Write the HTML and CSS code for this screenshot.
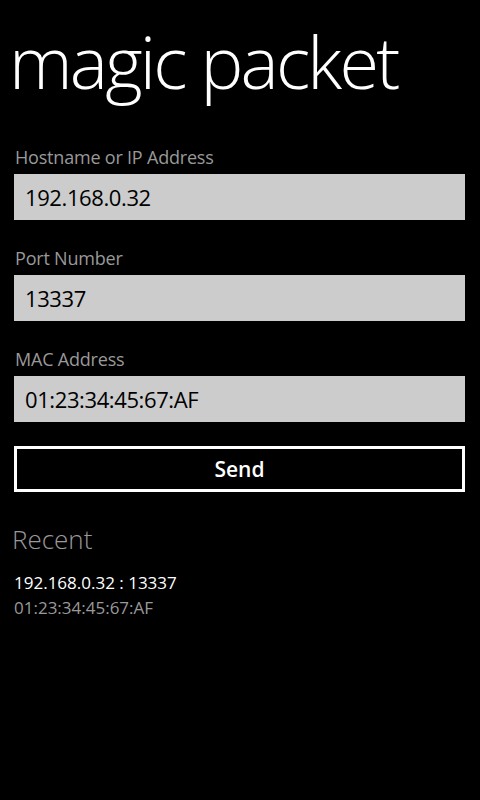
FILE: index.html
```html
<!DOCTYPE html>
<html lang="en">
<head>
<meta charset="utf-8">
<title>magic packet</title>
<link rel="stylesheet" href="styles.css">
</head>
<body>
<div class="page">
  <h1 class="title">magic packet</h1>
  <div class="form">
    <div class="field">
      <div class="label">Hostname or IP Address</div>
      <div class="input">192.168.0.32</div>
    </div>
    <div class="field">
      <div class="label">Port Number</div>
      <div class="input">13337</div>
    </div>
    <div class="field">
      <div class="label">MAC Address</div>
      <div class="input">01:23:34:45:67:AF</div>
    </div>
    <div class="button">Send</div>
  </div>
  <div class="recent">
    <div class="recent-title">Recent</div>
    <div class="recent-item">
      <div class="recent-host">192.168.0.32 : 13337</div>
      <div class="recent-mac">01:23:34:45:67:AF</div>
    </div>
  </div>
</div>
</body>
</html>
```
FILE: styles.css
```css
html, body {
  margin: 0;
  padding: 0;
  background: #000;
}
body {
  width: 480px;
  height: 800px;
  overflow: hidden;
  font-family: "Open Sans", "Noto Sans", sans-serif;
  color: #fff;
}
.page {
  display: flex;
  flex-direction: column;
}
.title {
  margin: 25px 0 0 9px;
  font-size: 72px;
  line-height: 72px;
  font-weight: 300;
  letter-spacing: -2.8px;
  color: #fff;
}
.form {
  display: flex;
  flex-direction: column;
  gap: 27px;
  margin-top: 49px;
  padding: 0 15px 0 14px;
}
.field {
  display: flex;
  flex-direction: column;
}
.label {
  font-size: 18px;
  line-height: 22px;
  letter-spacing: -0.2px;
  margin: 0 0 6px 1px;
  color: #999;
}
.input {
  height: 46px;
  background: #ccc;
  color: #000;
  font-size: 22px;
  letter-spacing: -0.4px;
  line-height: 46px;
  padding-left: 11px;
  box-sizing: border-box;
}
.button {
  margin-top: -3px;
  height: 46px;
  border: 3px solid #fff;
  box-sizing: border-box;
  display: flex;
  align-items: center;
  justify-content: center;
  font-size: 21px;
  font-weight: 600;
}
.recent {
  display: flex;
  flex-direction: column;
  padding-left: 12px;
  margin-top: 30px;
}
.recent-title {
  font-size: 26px;
  line-height: 34px;
  font-weight: 300;
  color: #999;
}
.recent-item {
  margin-top: 14px;
  padding-left: 2px;
}
.recent-host {
  font-size: 17px;
  line-height: 25px;
  color: #fff;
}
.recent-mac {
  font-size: 17px;
  line-height: 25px;
  color: #999;
}
```
